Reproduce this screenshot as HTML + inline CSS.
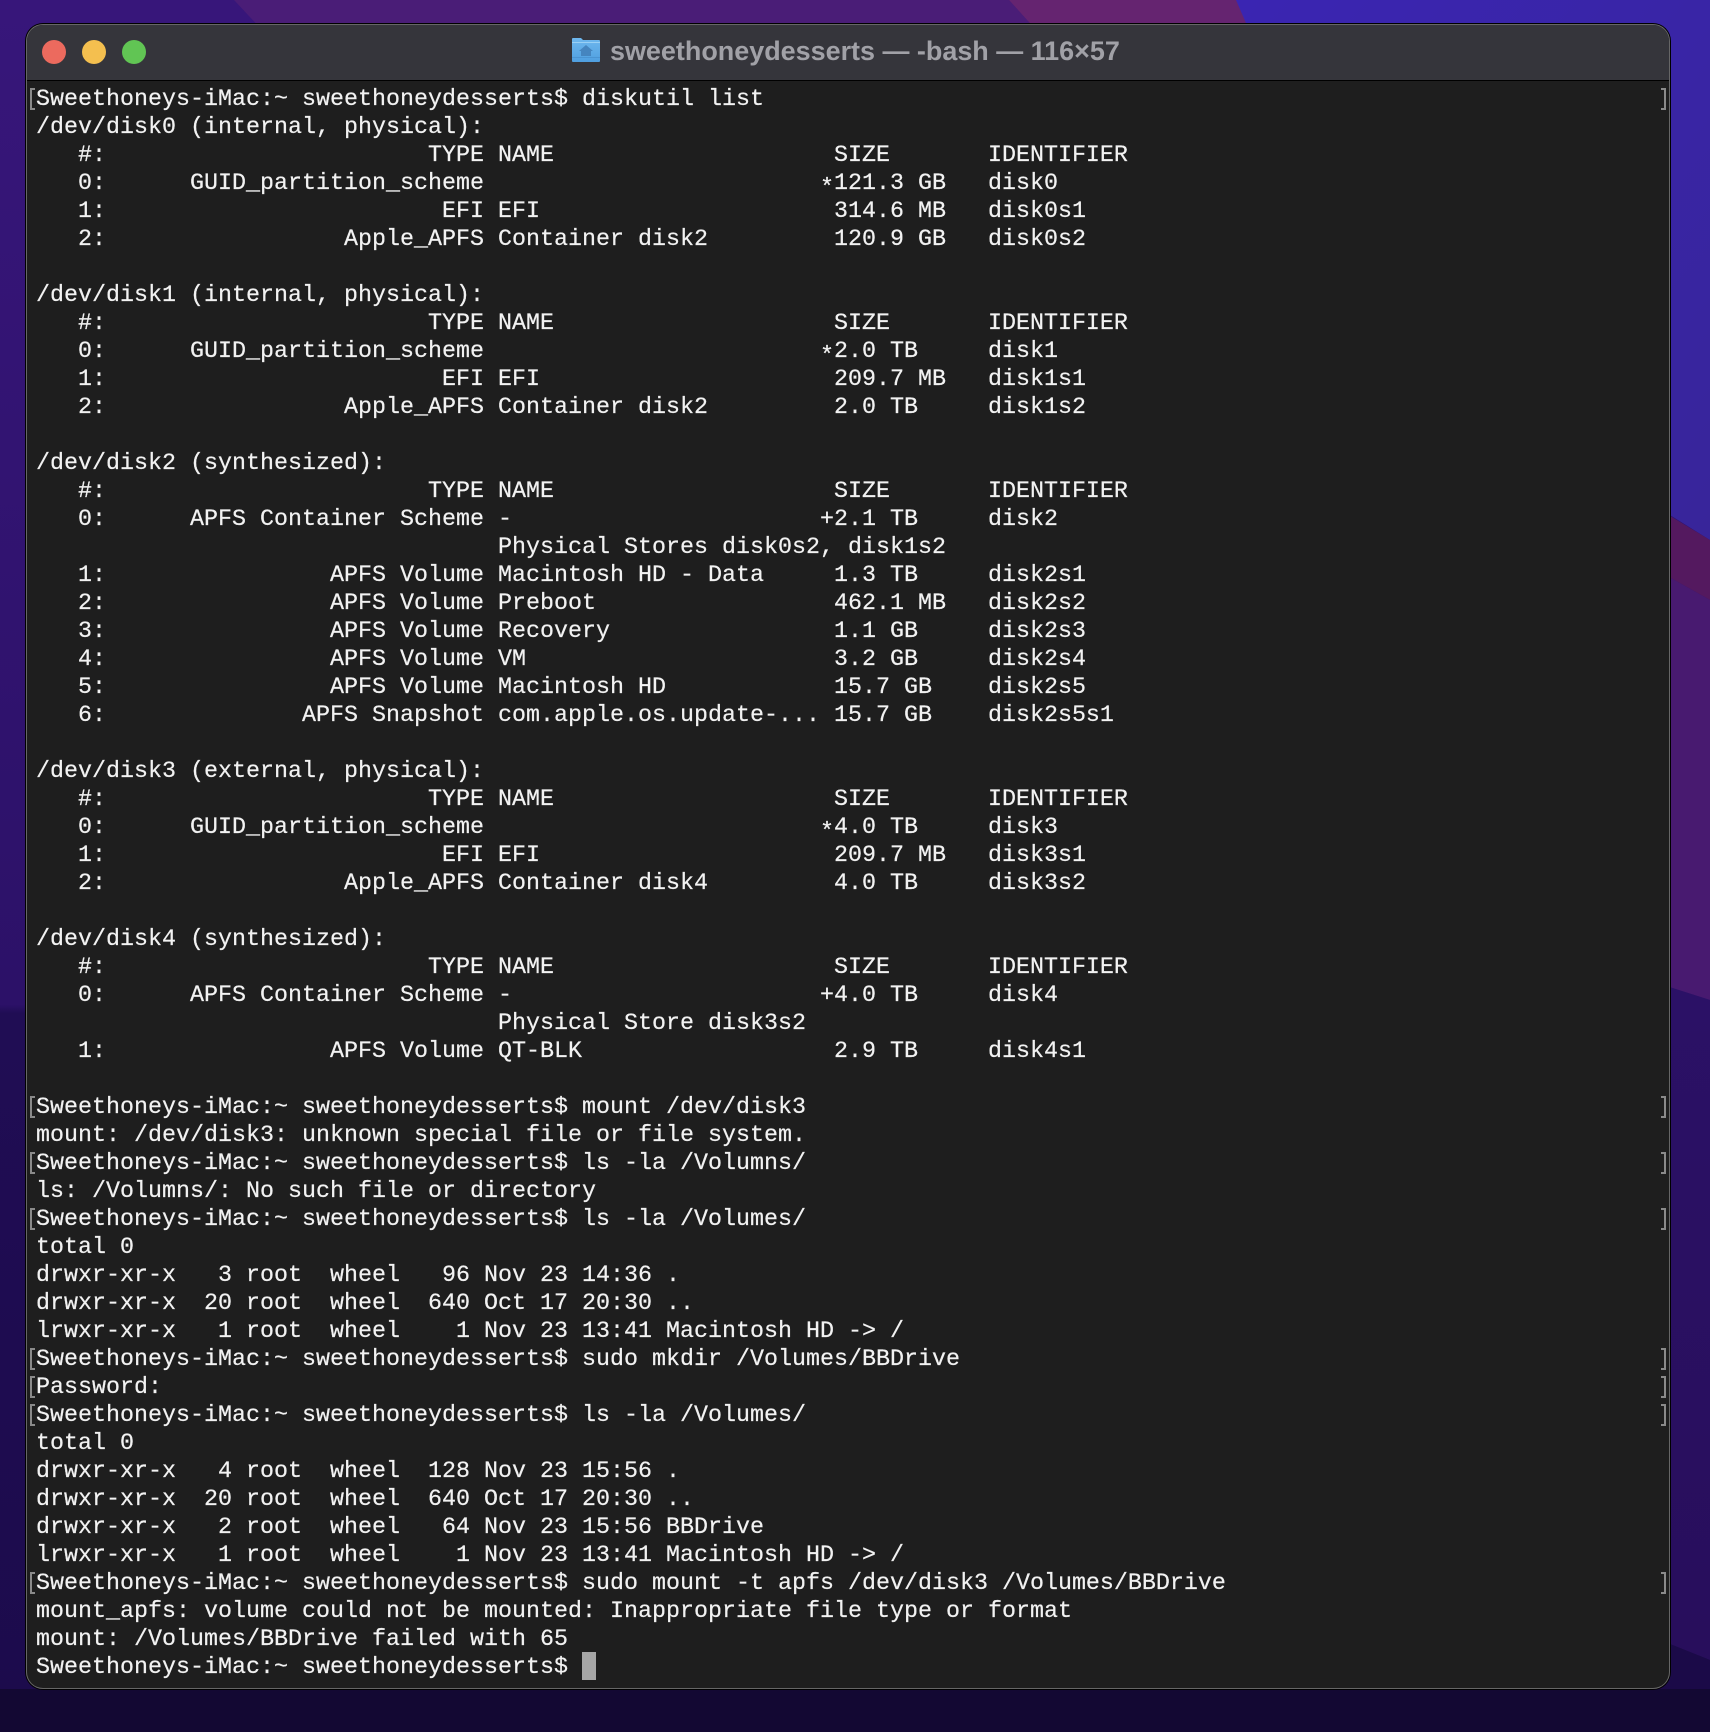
<!DOCTYPE html>
<html lang="en"><head><meta charset="utf-8"><title>sweethoneydesserts — -bash — 116×57</title>
<style>
html,body{margin:0;padding:0;width:1710px;height:1732px;overflow:hidden;background:#1a0b45}
#bg{position:absolute;left:0;top:0}
#win{position:absolute;left:26px;top:24px;width:1644px;height:1665px;box-sizing:border-box;border-radius:17px;overflow:hidden;background:#1e1e1e;box-shadow:0 0 0 1px #000,inset 0 0 0 1px #666}
#bar{position:absolute;left:1px;top:1px;right:1px;height:55px;background:#35353b;border-bottom:1px solid #000;border-radius:16px 16px 0 0}
.l{position:absolute;width:24px;height:24px;border-radius:50%;top:40px}
#t{position:absolute;left:610px;top:33px;font:bold 26.95px/36px "Liberation Sans",sans-serif;color:#a1a1a7;white-space:nowrap}
#term{position:absolute;left:36px;top:86px;margin:0;font:23.33px/28px "Liberation Mono",monospace;color:#f2f2f2;white-space:pre;-webkit-text-stroke:.2px #f2f2f2}
.s{position:relative;top:5px}
.bl,.br{position:absolute;width:3px;height:18px;border:solid #8a8a8a;border-width:2px 0}
.bl{left:30px;border-left:2px solid #8a8a8a}
.br{left:1661px;border-right:2px solid #8a8a8a}
#cur{position:absolute;left:582px;top:1652px;width:14px;height:28px;background:#a6a6a6}
</style></head><body>
<svg id="bg" width="1710" height="1732" viewBox="0 0 1710 1732" xmlns="http://www.w3.org/2000/svg">
<defs>
<linearGradient id="a" x1="0" y1="0" x2="0" y2="1"><stop offset="0" stop-color="#37167a"/><stop offset=".58" stop-color="#2c1168"/><stop offset=".585" stop-color="#200d54"/><stop offset="1" stop-color="#1c0b4c"/></linearGradient>
<linearGradient id="b" x1="0" y1="0" x2="1" y2="1"><stop offset="0" stop-color="#3a25b2"/><stop offset="1" stop-color="#38259a"/></linearGradient>
<linearGradient id="c" x1="0" y1="0" x2="0" y2="1"><stop offset="0" stop-color="#2b1166"/><stop offset="1" stop-color="#280e5c"/></linearGradient>
<linearGradient id="f" x1="0" y1="0" x2="0" y2="1"><stop offset="0" stop-color="#6fb8ee"/><stop offset="1" stop-color="#4f9fe0"/></linearGradient>
</defs>
<rect width="1710" height="1732" fill="url(#a)"/>
<polygon points="234,0 1009,0 1036,30 262,30" fill="#4a1d77"/>
<polygon points="1009,0 1238,0 1249,30 1036,30" fill="#652470"/>
<polygon points="1236,0 1710,0 1710,540 1670,515 1249,30" fill="url(#b)"/>
<polygon points="1660,510 1710,540 1710,600 1660,572" fill="#54195f"/>
<polygon points="1660,572 1710,600 1710,1000 1660,984" fill="#481a70"/>
<polygon points="1660,984 1710,1000 1710,1660 1660,1640" fill="url(#c)"/>
<polygon points="1660,1640 1710,1660 1710,1732 1660,1732" fill="#1b0a48"/>
<polygon points="0,1689 1710,1689 1710,1732 0,1732" fill="#130833"/>
</svg>
<div id="win"><div id="bar"></div></div>
<div class="l" style="left:42px;background:#ec6a5e"></div>
<div class="l" style="left:82px;background:#f4bf4f"></div>
<div class="l" style="left:122px;background:#61c554"></div>
<svg style="position:absolute;left:572px;top:37px" width="28" height="26" viewBox="0 0 28 26" xmlns="http://www.w3.org/2000/svg">
<path d="M1 25 Q0 25 0 24 V2 Q0 1 1 1 H9 L11 3 H27 Q28 3 28 4 V24 Q28 25 27 25Z" fill="url(#f)"/>
<path d="M0 5 H28 V6 H0Z" fill="#9ad0f4"/>
<path d="M0 20 H28 V21 H0Z" fill="#4a94d2"/>
<path d="M14 8 L21 14 H19 V19 H9 V14 H7Z" fill="#4585bf"/>
</svg>
<div id="t">sweethoneydesserts — -bash — 116×57</div>
<pre id="term">Sweethoneys-iMac:~ sweethoneydesserts$ diskutil list
/dev/disk0 (internal, physical):
   #:                       TYPE NAME                    SIZE       IDENTIFIER
   0:      GUID_partition_scheme                        <span class="s">*</span>121.3 GB   disk0
   1:                        EFI EFI                     314.6 MB   disk0s1
   2:                 Apple_APFS Container disk2         120.9 GB   disk0s2

/dev/disk1 (internal, physical):
   #:                       TYPE NAME                    SIZE       IDENTIFIER
   0:      GUID_partition_scheme                        <span class="s">*</span>2.0 TB     disk1
   1:                        EFI EFI                     209.7 MB   disk1s1
   2:                 Apple_APFS Container disk2         2.0 TB     disk1s2

/dev/disk2 (synthesized):
   #:                       TYPE NAME                    SIZE       IDENTIFIER
   0:      APFS Container Scheme -                      +2.1 TB     disk2
                                 Physical Stores disk0s2, disk1s2
   1:                APFS Volume Macintosh HD - Data     1.3 TB     disk2s1
   2:                APFS Volume Preboot                 462.1 MB   disk2s2
   3:                APFS Volume Recovery                1.1 GB     disk2s3
   4:                APFS Volume VM                      3.2 GB     disk2s4
   5:                APFS Volume Macintosh HD            15.7 GB    disk2s5
   6:              APFS Snapshot com.apple.os.update-... 15.7 GB    disk2s5s1

/dev/disk3 (external, physical):
   #:                       TYPE NAME                    SIZE       IDENTIFIER
   0:      GUID_partition_scheme                        <span class="s">*</span>4.0 TB     disk3
   1:                        EFI EFI                     209.7 MB   disk3s1
   2:                 Apple_APFS Container disk4         4.0 TB     disk3s2

/dev/disk4 (synthesized):
   #:                       TYPE NAME                    SIZE       IDENTIFIER
   0:      APFS Container Scheme -                      +4.0 TB     disk4
                                 Physical Store disk3s2
   1:                APFS Volume QT-BLK                  2.9 TB     disk4s1

Sweethoneys-iMac:~ sweethoneydesserts$ mount /dev/disk3
mount: /dev/disk3: unknown special file or file system.
Sweethoneys-iMac:~ sweethoneydesserts$ ls -la /Volumns/
ls: /Volumns/: No such file or directory
Sweethoneys-iMac:~ sweethoneydesserts$ ls -la /Volumes/
total 0
drwxr-xr-x   3 root  wheel   96 Nov 23 14:36 .
drwxr-xr-x  20 root  wheel  640 Oct 17 20:30 ..
lrwxr-xr-x   1 root  wheel    1 Nov 23 13:41 Macintosh HD -&gt; /
Sweethoneys-iMac:~ sweethoneydesserts$ sudo mkdir /Volumes/BBDrive
Password:
Sweethoneys-iMac:~ sweethoneydesserts$ ls -la /Volumes/
total 0
drwxr-xr-x   4 root  wheel  128 Nov 23 15:56 .
drwxr-xr-x  20 root  wheel  640 Oct 17 20:30 ..
drwxr-xr-x   2 root  wheel   64 Nov 23 15:56 BBDrive
lrwxr-xr-x   1 root  wheel    1 Nov 23 13:41 Macintosh HD -&gt; /
Sweethoneys-iMac:~ sweethoneydesserts$ sudo mount -t apfs /dev/disk3 /Volumes/BBDrive
mount_apfs: volume could not be mounted: Inappropriate file type or format
mount: /Volumes/BBDrive failed with 65
Sweethoneys-iMac:~ sweethoneydesserts$ </pre>
<div id="cur"></div>
<div class="bl" style="top:88px"></div><div class="br" style="top:88px"></div>
<div class="bl" style="top:1096px"></div><div class="br" style="top:1096px"></div>
<div class="bl" style="top:1152px"></div><div class="br" style="top:1152px"></div>
<div class="bl" style="top:1208px"></div><div class="br" style="top:1208px"></div>
<div class="bl" style="top:1348px"></div><div class="br" style="top:1348px"></div>
<div class="bl" style="top:1376px"></div><div class="br" style="top:1376px"></div>
<div class="bl" style="top:1404px"></div><div class="br" style="top:1404px"></div>
<div class="bl" style="top:1572px"></div><div class="br" style="top:1572px"></div>
</body></html>
